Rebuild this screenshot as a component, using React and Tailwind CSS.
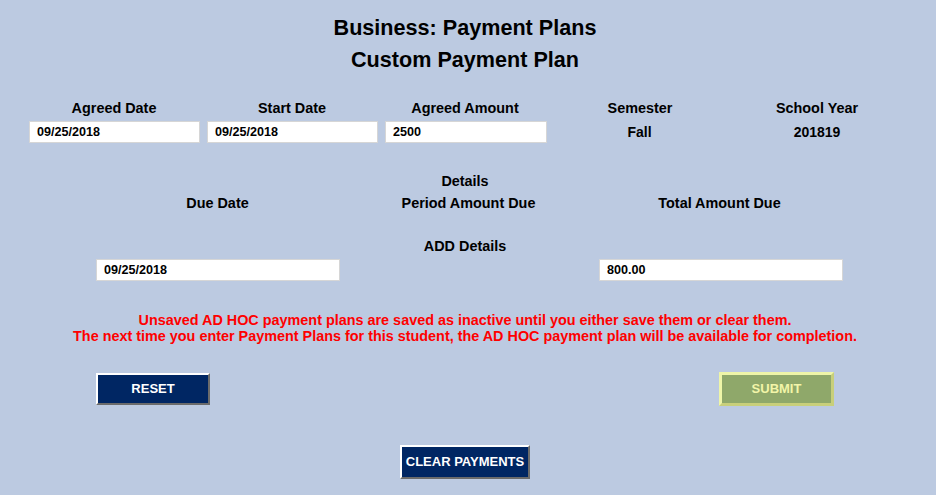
import React, { useState } from "react";

const font = { fontFamily: '"Liberation Sans", Arial, sans-serif' };

const Field = ({ value, onChange, className = "" }) => (
  <input
    type="text"
    value={value}
    onChange={(e) => onChange(e.target.value)}
    className={`h-[22px] border border-[#d6d6d6] bg-white pl-[7px] text-[12.6px] font-bold text-black outline-none ${className}`}
  />
);

const App = () => {
  const [agreedDate, setAgreedDate] = useState("09/25/2018");
  const [startDate, setStartDate] = useState("09/25/2018");
  const [amount, setAmount] = useState("2500");
  const [dueDate, setDueDate] = useState("09/25/2018");
  const [total, setTotal] = useState("800.00");

  return (
    <div style={font} className="min-h-[495px] w-full bg-[#bccae1] text-black">
      <div className="w-[930px]">
        {/* Page title */}
        <div className="pt-[12px] text-center text-[21.6px] font-bold leading-[32px]">
          <div>Business: Payment Plans</div>
          <div>Custom Payment Plan</div>
        </div>

        {/* Plan summary */}
        <div className="mx-auto mt-[22px] grid w-[880px] grid-cols-5 text-[14.4px] font-bold leading-[20px]">
          <div className="pl-[2px] text-center">Agreed Date</div>
          <div className="pl-[6px] text-center">Start Date</div>
          <div className="text-center">Agreed Amount</div>
          <div className="pr-[2px] text-center">Semester</div>
          <div className="text-center">School Year</div>
        </div>
        <div className="mx-auto mt-[3px] grid w-[880px] grid-cols-5 items-center text-[14px] font-bold">
          <div className="pl-[4px]">
            <Field value={agreedDate} onChange={setAgreedDate} className="w-[171px]" />
          </div>
          <div className="pl-[6px]">
            <Field value={startDate} onChange={setStartDate} className="w-[171px]" />
          </div>
          <div className="pl-[8px]">
            <Field value={amount} onChange={setAmount} className="w-[162px]" />
          </div>
          <div className="pr-[3px] text-center">Fall</div>
          <div className="text-center">201819</div>
        </div>

        {/* Details */}
        <div className="mt-[28px] text-center text-[14.4px] font-bold leading-[20px]">Details</div>
        <div className="mx-auto mt-[2px] grid w-[760px] grid-cols-3 pl-[7px] text-[14.4px] font-bold leading-[20px]">
          <div className="text-center">Due Date</div>
          <div className="text-center">Period Amount Due</div>
          <div className="text-center">Total Amount Due</div>
        </div>
        <div className="mt-[23px] text-center text-[14.4px] font-bold leading-[20px]">ADD Details</div>
        <div className="mx-auto mt-[1px] grid w-[756px] grid-cols-3">
          <div className="pl-[9px]">
            <Field value={dueDate} onChange={setDueDate} className="w-[244px]" />
          </div>
          <div />
          <div className="pl-[8px]">
            <Field value={total} onChange={setTotal} className="w-[244px]" />
          </div>
        </div>

        {/* Warning */}
        <div className="mt-[31px] text-center text-[14.4px] font-bold leading-[16px] text-[#ff0000]">
          <div>Unsaved AD HOC payment plans are saved as inactive until you either save them or clear them.</div>
          <div>The next time you enter Payment Plans for this student, the AD HOC payment plan will be available for completion.</div>
        </div>

        {/* Actions */}
        <div className="mx-auto mt-[28px] flex w-[756px] items-center justify-between">
          <button className="ml-[9px] h-[32px] w-[114px] border-2 border-t-white border-l-white border-b-[#6b6b6b] border-r-[#6b6b6b] bg-[#002663] text-[13px] font-bold text-white">
            RESET
          </button>
          <button className="mr-[9px] h-[34px] w-[115px] border-[3px] border-t-[#eef5a8] border-l-[#eef5a8] border-b-[#c8cf7a] border-r-[#c8cf7a] bg-[#8fa86a] text-[13px] font-bold text-[#f2f5a8]">
            SUBMIT
          </button>
        </div>
        <div className="mt-[39px] flex justify-center">
          <button className="h-[34px] w-[130px] border-2 border-t-white border-l-white border-b-[#6b6b6b] border-r-[#6b6b6b] bg-[#002663] text-[13px] font-bold text-white">
            CLEAR PAYMENTS
          </button>
        </div>
      </div>
    </div>
  );
};

export default App;
